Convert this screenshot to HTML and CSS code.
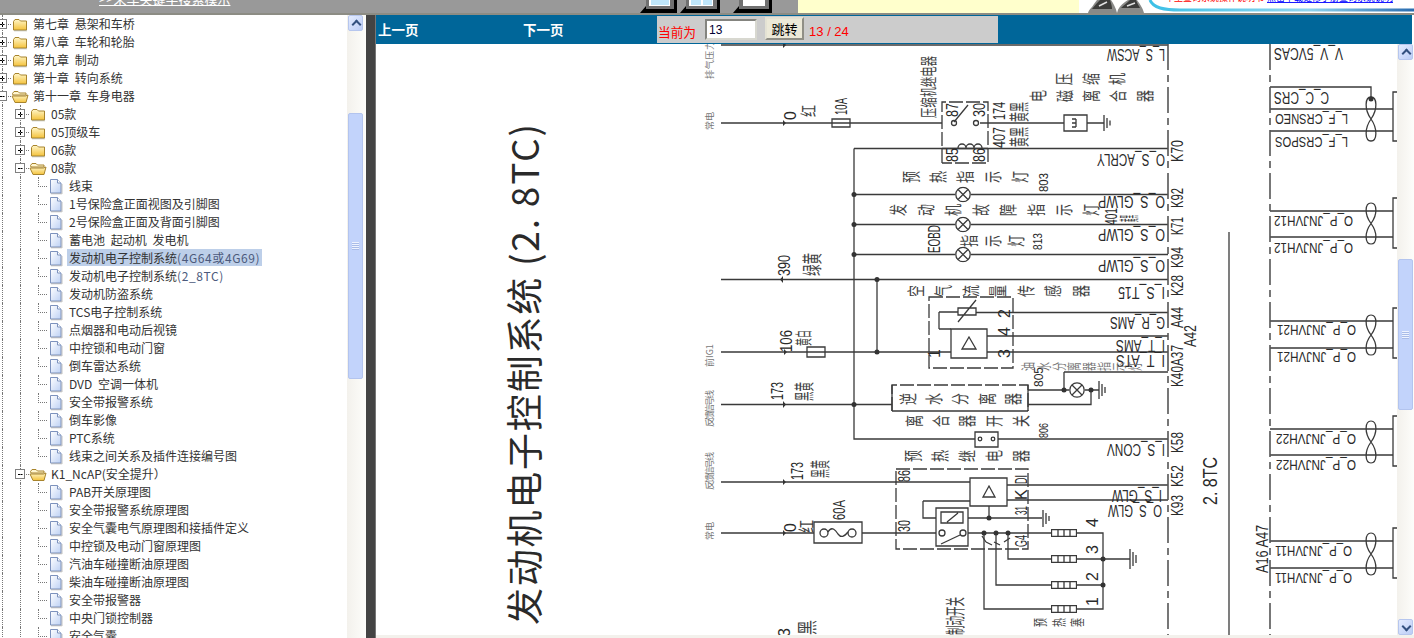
FILE: index.html
```html
<!DOCTYPE html>
<html lang="zh-CN">
<head>
  <meta charset="UTF-8"/>
  <title>电路图</title>
  <link rel="stylesheet" href="styles.css">
</head>
<body>
  <svg class="defs" width="0" height="0">
    <defs>
      <linearGradient id="gold" x1="0" y1="0" x2="0" y2="1">
        <stop offset="0" stop-color="#fff6c8"/>
        <stop offset="1" stop-color="#f4c23c"/>
      </linearGradient>
      <linearGradient id="paper" x1="0" y1="0" x2="1" y2="1">
        <stop offset="0" stop-color="#ffffff"/>
        <stop offset="1" stop-color="#bcd0f4"/>
      </linearGradient>
      <symbol id="folder" viewBox="0 0 18 18">
        <path d="M2.500 6.500 l1.500-2 h4 l1.500 1.500 h6 v9 h-13z" fill="url(#gold)" stroke="#a8842c"/>
        <path d="M3 15.800 h13" stroke="#8a8a7a" stroke-opacity=".5"/>
      </symbol>
      <symbol id="folder-open" viewBox="0 0 18 18">
        <path d="M1.500 6.500 l1.500-2 h4 l1.500 1.500 h6.500 v2 h-13z" fill="#fff6d0" stroke="#a8842c"/>
        <path d="M1 9 h13.500 l2.500 -1 l-2 7.500 h-11z" fill="url(#gold)" stroke="#a8842c"/>
      </symbol>
      <symbol id="doc" viewBox="0 0 18 18">
        <path d="M3.500 2.500 h7 l3.500 3.500 v10 h-10.500z" fill="url(#paper)" stroke="#7d92bd"/>
        <path d="M10.500 2.500 v3.500 h3.500" fill="#fff" stroke="#7d92bd"/>
        <path d="M4 16.800 h11 M15 7 v10" stroke="#9a9a9a" stroke-opacity=".6"/>
      </symbol>
      <symbol id="twist" viewBox="0 0 10 44" preserveAspectRatio="none" overflow="visible">
        <path d="M5 22 C-2 12 -1 0 5 0 C11 0 12 12 5 22 C-2 32 -1 44 5 44 C11 44 12 32 5 22z"/>
      </symbol>
      <symbol id="lamp" viewBox="0 0 16 16">
        <circle cx="8" cy="8" r="7.200"/>
        <path d="M3 3 L13 13 M13 3 L3 13"/>
      </symbol>
      <symbol id="conn" viewBox="0 0 26 8">
        <path d="M.5 .5 h25 v7 h-25z M7 .5 v7 M13 .5 v7 M19 .5 v7"/>
      </symbol>
    </defs>
  </svg>

  <header class="topbar">
    <div class="top-gray">
      <a class="search-link" href="#">&gt;&gt;来车关键字搜索模示</a>
      <div class="win-icons">
        <svg class="win" width="37" height="13" viewBox="0 0 37 13"><path d="M0 13 L6 6 V0 H37 V13z" fill="#000"/><path d="M6 0 H34 V9 H6z" fill="#707070"/><path d="M9 0 H30 V6 H9z" fill="#fff"/><path d="M11 0 H29 V5 H11z" fill="#bfe6fa"/></svg>
        <svg class="win" width="40" height="13" viewBox="0 0 40 13"><path d="M0 13 L6 6 V0 H40 V13z" fill="#000"/><path d="M6 0 H37 V9 H6z" fill="#707070"/><path d="M9 0 H33 V6 H9z" fill="#fff"/><path d="M11 0 H21 V5 H11z M23 0 H32 V5 H23z" fill="#bfe6fa"/></svg>
        <svg class="win win-last" width="39" height="13" viewBox="0 0 39 13"><path d="M0 13 L6 6 V0 H39 V13z" fill="#000"/><path d="M6 0 H36 V9 H6z" fill="#707070"/><path d="M10 0 H32 V6 H10z" fill="#fff"/></svg>
      </div>
    </div>
    <div class="top-note"></div>
    <svg class="top-promo" width="335" height="13" viewBox="1079 0 335 13">
      <linearGradient id="sky" gradientUnits="userSpaceOnUse" x1="1150" y1="0" x2="1414" y2="0">
        <stop offset="0" stop-color="#3cc0e6"/>
        <stop offset=".6" stop-color="#8fd4ee"/>
        <stop offset="1" stop-color="#2a6cb0"/>
      </linearGradient>
      <path d="M1088 13 C1089 9 1092 8 1094 4 L1097 0 H1111 C1113 3 1116 8 1117 13z" fill="#8a8a88"/>
      <path d="M1117 13 C1118 8 1121 5 1125 2 L1128 0 H1137 C1139 3 1143 8 1144 13z" fill="#8a8a88"/>
      <path d="M1092 9 C1095 5 1098 2 1100 0 H1110 C1111 3 1112 6 1112 9z" fill="#3c3c3a"/>
      <path d="M1121 8 C1124 5 1128 2 1130 0 H1136 C1137 3 1139 6 1140 8z" fill="#3c3c3a"/>
      <path d="M1099 6 L1107 2 M1127 6 L1135 3" stroke="#e0e0e0" stroke-width="1.500"/>
      <path d="M1150 0 C1153 8 1164 10 1180 10 H1414" fill="none" stroke="url(#sky)" stroke-width="3"/>
      <text class="promo-red" x="1165" y="1">车型查询系统操作说明书</text>
      <text class="promo-blue" x="1267" y="1">点击下载维修手册查询系统说明</text>
    </svg>
  </header>

  <main class="main">
    <aside class="side">
      <nav class="tree">
        <div class="row"><i class="cell plus"></i><svg class="ico"><use href="#folder"/></svg><a>第七章 悬架和车桥</a></div>
        <div class="row"><i class="cell plus"></i><svg class="ico"><use href="#folder"/></svg><a>第八章 车轮和轮胎</a></div>
        <div class="row"><i class="cell plus"></i><svg class="ico"><use href="#folder"/></svg><a>第九章 制动</a></div>
        <div class="row"><i class="cell plus"></i><svg class="ico"><use href="#folder"/></svg><a>第十章 转向系统</a></div>
        <div class="row"><i class="cell minus"></i><svg class="ico"><use href="#folder-open"/></svg><a>第十一章 车身电器</a></div>
        <div class="row"><i class="cell line"></i><i class="cell plus"></i><svg class="ico"><use href="#folder"/></svg><a>05款</a></div>
        <div class="row"><i class="cell line"></i><i class="cell plus"></i><svg class="ico"><use href="#folder"/></svg><a>05顶级车</a></div>
        <div class="row"><i class="cell line"></i><i class="cell plus"></i><svg class="ico"><use href="#folder"/></svg><a>06款</a></div>
        <div class="row"><i class="cell line"></i><i class="cell minus"></i><svg class="ico"><use href="#folder-open"/></svg><a>08款</a></div>
        <div class="row"><i class="cell line"></i><i class="cell line"></i><i class="cell join"></i><svg class="ico"><use href="#doc"/></svg><a>线束</a></div>
        <div class="row"><i class="cell line"></i><i class="cell line"></i><i class="cell join"></i><svg class="ico"><use href="#doc"/></svg><a>1号保险盒正面视图及引脚图</a></div>
        <div class="row"><i class="cell line"></i><i class="cell line"></i><i class="cell join"></i><svg class="ico"><use href="#doc"/></svg><a>2号保险盒正面及背面引脚图</a></div>
        <div class="row"><i class="cell line"></i><i class="cell line"></i><i class="cell join"></i><svg class="ico"><use href="#doc"/></svg><a>蓄电池 起动机 发电机</a></div>
        <div class="row"><i class="cell line"></i><i class="cell line"></i><i class="cell join"></i><svg class="ico"><use href="#doc"/></svg><a class="sel">发动机电子控制系统<span class="lat">(4G64或4G69)</span></a></div>
        <div class="row"><i class="cell line"></i><i class="cell line"></i><i class="cell join"></i><svg class="ico"><use href="#doc"/></svg><a>发动机电子控制系统<span class="lat">(2_8TC)</span></a></div>
        <div class="row"><i class="cell line"></i><i class="cell line"></i><i class="cell join"></i><svg class="ico"><use href="#doc"/></svg><a>发动机防盗系统</a></div>
        <div class="row"><i class="cell line"></i><i class="cell line"></i><i class="cell join"></i><svg class="ico"><use href="#doc"/></svg><a>TCS电子控制系统</a></div>
        <div class="row"><i class="cell line"></i><i class="cell line"></i><i class="cell join"></i><svg class="ico"><use href="#doc"/></svg><a>点烟器和电动后视镜</a></div>
        <div class="row"><i class="cell line"></i><i class="cell line"></i><i class="cell join"></i><svg class="ico"><use href="#doc"/></svg><a>中控锁和电动门窗</a></div>
        <div class="row"><i class="cell line"></i><i class="cell line"></i><i class="cell join"></i><svg class="ico"><use href="#doc"/></svg><a>倒车雷达系统</a></div>
        <div class="row"><i class="cell line"></i><i class="cell line"></i><i class="cell join"></i><svg class="ico"><use href="#doc"/></svg><a>DVD 空调一体机</a></div>
        <div class="row"><i class="cell line"></i><i class="cell line"></i><i class="cell join"></i><svg class="ico"><use href="#doc"/></svg><a>安全带报警系统</a></div>
        <div class="row"><i class="cell line"></i><i class="cell line"></i><i class="cell join"></i><svg class="ico"><use href="#doc"/></svg><a>倒车影像</a></div>
        <div class="row"><i class="cell line"></i><i class="cell line"></i><i class="cell join"></i><svg class="ico"><use href="#doc"/></svg><a>PTC系统</a></div>
        <div class="row"><i class="cell line"></i><i class="cell line"></i><i class="cell join"></i><svg class="ico"><use href="#doc"/></svg><a>线束之间关系及插件连接编号图</a></div>
        <div class="row"><i class="cell line"></i><i class="cell minus"></i><svg class="ico"><use href="#folder-open"/></svg><a>K1_NcAP(安全提升）</a></div>
        <div class="row"><i class="cell line"></i><i class="cell line"></i><i class="cell join"></i><svg class="ico"><use href="#doc"/></svg><a>PAB开关原理图</a></div>
        <div class="row"><i class="cell line"></i><i class="cell line"></i><i class="cell join"></i><svg class="ico"><use href="#doc"/></svg><a>安全带报警系统原理图</a></div>
        <div class="row"><i class="cell line"></i><i class="cell line"></i><i class="cell join"></i><svg class="ico"><use href="#doc"/></svg><a>安全气囊电气原理图和接插件定义</a></div>
        <div class="row"><i class="cell line"></i><i class="cell line"></i><i class="cell join"></i><svg class="ico"><use href="#doc"/></svg><a>中控锁及电动门窗原理图</a></div>
        <div class="row"><i class="cell line"></i><i class="cell line"></i><i class="cell join"></i><svg class="ico"><use href="#doc"/></svg><a>汽油车碰撞断油原理图</a></div>
        <div class="row"><i class="cell line"></i><i class="cell line"></i><i class="cell join"></i><svg class="ico"><use href="#doc"/></svg><a>柴油车碰撞断油原理图</a></div>
        <div class="row"><i class="cell line"></i><i class="cell line"></i><i class="cell join"></i><svg class="ico"><use href="#doc"/></svg><a>安全带报警器</a></div>
        <div class="row"><i class="cell line"></i><i class="cell line"></i><i class="cell join"></i><svg class="ico"><use href="#doc"/></svg><a>中央门锁控制器</a></div>
        <div class="row"><i class="cell line"></i><i class="cell line"></i><i class="cell join"></i><svg class="ico"><use href="#doc"/></svg><a>安全气囊</a></div>
      </nav>
      <div class="vscroll left-scroll">
        <div class="sbtn up"></div>
        <div class="thumb"><span class="grip"></span></div>
      </div>
    </aside>

    <div class="divider"></div>

    <section class="viewer">
      <div class="pager">
        <a class="page-link first">上一页</a>
        <a class="page-link">下一页</a>
        <form class="jump">
          <span class="now">当前为</span>
          <input class="page-input" value="13">
          <button class="go" type="button">跳转</button>
          <span class="count">13 / 24</span>
        </form>
      </div>
      <div class="viewer-body">
        <svg class="sheet" width="1021" height="591" viewBox="376 44 1021 591">
          <!-- wires -->
          <g class="w">
            <path d="M721 45 H1168"/>
            <path d="M721 123 H942 M980 123 H1064 M1087 123 H1104"/>
            <path d="M854 148.500 H1168 M854 148.500 V439 H975 M998 439 H1168"/>
            <path d="M854 194.500 H955 M971 194.500 H1168"/>
            <path d="M854 224.500 H955 M971 224.500 H1168"/>
            <path d="M854 254.500 H955 M971 254.500 H1168"/>
            <path d="M721 279.500 H1168 M877 279.500 V352"/>
            <path d="M721 352 H951 M987 352 H1168 M987 336 H1168 M976 312.500 H1168"/>
            <path d="M1064 372 H1168 M1064 372 V390 M1028 390 H1069 M1085 390 H1099 M1028 404.500 H1091 V390"/>
            <path d="M721 404.500 H892"/>
            <path d="M721 482 H970 M1007 485 H1168 M1007 500 H1168"/>
            <path d="M721 533 H814 M862 533 H936 M968 533 H1051"/>
            <path d="M923 501 H970 M923 501 V518 H936 M968 518 H1042 M989 506 V518"/>
            <path d="M1008 533 V559 H1051 M996 533 V585 H1051 M984 533 V609 H1051"/>
            <path d="M1077 533 H1103 V609 H1077 M1077 559 H1130 M1077 585 H1103"/>
            <path d="M1229 232 V635"/>
            <path d="M1270 87 H1371 V98 M1270 109 H1393 M1270 131 H1393"/>
            <path d="M1270 211 H1393 M1270 237 H1393 M1270 321 H1393 M1270 348 H1393"/>
            <path d="M1270 429 H1393 M1270 455 H1393 M1270 541 H1393 M1270 568 H1393"/>
            <path d="M1397 92 H1393 V141 H1397 M1397 198 H1393 V248 H1397 M1397 308 H1393 V358 H1397 M1397 416 H1393 V466 H1397 M1397 528 H1393 V578 H1397"/>
          </g>
          <!-- boxes -->
          <g class="w">
            <path class="dash" d="M942 163 V102 H988 V163 H942"/>
            <path d="M942 148.500 H988"/>
            <path d="M954 122 L968 105"/>
            <circle cx="954" cy="123" r="2.500"/><circle cx="976" cy="123" r="2.500"/>
            <path d="M958 148 a4 4 0 0 1 8 0 a4 4 0 0 1 8 0 a4 4 0 0 1 8 0"/>
            <path d="M1064 115 H1087 V131 H1064z M1072 119 h4 M1076 119 v8 M1072 127 h4 M1072 123 h4"/>
            <path d="M832 119 H850 V127 H832z"/>
            <path d="M807 347 h18 v10 h-18z"/>
            <path class="dash" d="M929 297 H1013 V368 H929z"/>
            <path d="M939 312 H958 M939 312 V329 M939 329 H951"/>
            <path d="M958 308 H976 V315 H958z M958 322 L976 300"/>
            <path d="M951 329 H987 V358 H951z M969 337 L976 349 H962z"/>
            <path class="dash" d="M892 411 V385 H1028 V411"/>
            <path d="M892 411 H1028 M892 385 V411 M1028 385 V411"/>
            <path d="M975 432 H998 V447 H975z"/>
            <circle cx="980" cy="439" r="1.800"/><circle cx="993" cy="439" r="1.800"/>
            <path class="dash" d="M896 469 H1028 V549 H896z"/>
            <path d="M970 478 H1007 V506 H970z M989 486 L995 497 H983z"/>
            <path d="M814 522 H862 V543 H814z"/>
            <circle cx="824" cy="533" r="4"/><circle cx="852" cy="533" r="4"/>
            <path d="M828 532 c4 -7 8 -1 10 2 c3 4 6 3 10 -2"/>
            <path d="M936 508 H968 V546 H936z M941 512 H963 V523 H941z M947 522 L958 513"/>
            <circle cx="942" cy="533" r="3"/><circle cx="963" cy="533" r="3"/>
            <path d="M941 544 L960 535"/>
            <path d="M1104 115 V131 M1107 118 V128 M1110 120.500 V125.500"/>
            <path d="M1099 381 V399 M1102 384 V396 M1105 387 V393"/>
            <path d="M1043 510 V527 M1046 513 V524 M1049 516 V521"/>
            <path d="M1130 549 V569 M1133 552 V566 M1136 555 V563"/>
            <path d="M992 545 l-6 -3 M982 536 l4 6 M1000 545 l-6 -3 M1010 538 l-6 4"/>
          </g>
          <g class="w dash-thick">
            <path d="M1168 44 V635"/>
            <path d="M1270 44 V635"/>
          </g>
          <g class="w">
            <use href="#lamp" x="955" y="186.500" width="16" height="16"/>
            <use href="#lamp" x="955" y="216.500" width="16" height="16"/>
            <use href="#lamp" x="955" y="246.500" width="16" height="16"/>
            <use href="#lamp" x="1069" y="382" width="16" height="16"/>
            <use href="#conn" x="1051" y="529" width="26" height="8"/>
            <use href="#conn" x="1051" y="555" width="26" height="8"/>
            <use href="#conn" x="1051" y="581" width="26" height="8"/>
            <use href="#conn" x="1051" y="605" width="26" height="8"/>
            <use href="#twist" x="1366" y="97" width="10" height="44"/>
            <use href="#twist" x="1366" y="203" width="10" height="41"/>
            <use href="#twist" x="1366" y="315" width="10" height="40"/>
            <use href="#twist" x="1366" y="421" width="10" height="42"/>
            <use href="#twist" x="1366" y="533" width="10" height="42"/>
          </g>
          <g class="dots">
            <circle cx="854" cy="194.500" r="2.500"/><circle cx="854" cy="224.500" r="2.500"/><circle cx="854" cy="254.500" r="2.500"/>
            <circle cx="877" cy="279.500" r="2.500"/><circle cx="877" cy="352" r="2.500"/><circle cx="854" cy="404.500" r="2.500"/>
            <circle cx="1064" cy="390" r="2.500"/><circle cx="1091" cy="390" r="2.500"/><circle cx="989" cy="518" r="2.500"/>
            <circle cx="984" cy="533" r="2.500"/><circle cx="996" cy="533" r="2.500"/><circle cx="1008" cy="533" r="2.500"/>
            <circle cx="1103" cy="559" r="2.500"/><circle cx="1103" cy="585" r="2.500"/><circle cx="1371" cy="99" r="2.500"/>
            <path d="M783 42 l3 3 l-3 3z M783 120 l3 3 l-3 3z M783 276 l-3 3.500 l3 3.500z M784 349 l3 3 l-3 3z M783 401 l3 3.500 l-3 3.500z M783 479 l3 3 l-3 3z M783 530 l3 3 l-3 3z"/>
          </g>

          <!-- title -->
          <text class="title" transform="translate(539 625) rotate(-90)" textLength="501" lengthAdjust="spacing">发动机电子控制系统 (2. 8TC)</text>
          <text class="lb big" transform="translate(1217 505) rotate(-90)" textLength="48" lengthAdjust="spacingAndGlyphs">2. 8TC</text>

          <!-- upside down signal names, underscores sit above the letters -->
          <g class="lb" transform="translate(0 1.500)">
            <text transform="translate(1165 47) rotate(180)" textLength="58" lengthAdjust="spacingAndGlyphs">L_S_ACSW</text>
            <text transform="translate(1165 152) rotate(180)" textLength="68" lengthAdjust="spacingAndGlyphs">O_S_ACRLY</text>
            <text transform="translate(1165 194) rotate(180)" textLength="67" lengthAdjust="spacingAndGlyphs">O_S_GLWP</text>
            <text transform="translate(1165 227) rotate(180)" textLength="67" lengthAdjust="spacingAndGlyphs">O_S_GLWP</text>
            <text transform="translate(1165 258) rotate(180)" textLength="67" lengthAdjust="spacingAndGlyphs">O_S_GLWP</text>
            <text transform="translate(1165 285) rotate(180)" textLength="47" lengthAdjust="spacingAndGlyphs">I_S_T15</text>
            <text transform="translate(1165 315) rotate(180)" textLength="55" lengthAdjust="spacingAndGlyphs">G_R_AMS</text>
            <text transform="translate(1165 338) rotate(180)" textLength="49" lengthAdjust="spacingAndGlyphs">I_T_AMS</text>
            <text transform="translate(1165 353) rotate(180)" textLength="49" lengthAdjust="spacingAndGlyphs">I_T_ATS</text>
            <text transform="translate(1165 442) rotate(180)" textLength="58" lengthAdjust="spacingAndGlyphs">I_S_CONV</text>
            <text transform="translate(1162 488) rotate(180)" textLength="50" lengthAdjust="spacingAndGlyphs">I_S_GLW</text>
            <text transform="translate(1162 503) rotate(180)" textLength="54" lengthAdjust="spacingAndGlyphs">O_S_GLW</text>
            <text transform="translate(1343 46) rotate(180)" textLength="69" lengthAdjust="spacingAndGlyphs">V_V_5VCAS</text>
            <text transform="translate(1329 90) rotate(180)" textLength="55" lengthAdjust="spacingAndGlyphs">C_C_CRS</text>
          </g>
          <g class="lb sm" transform="translate(0 1.500)">
            <text transform="translate(1348 112) rotate(180)" textLength="73" lengthAdjust="spacingAndGlyphs">L_F_CRSNEO</text>
            <text transform="translate(1348 135) rotate(180)" textLength="73" lengthAdjust="spacingAndGlyphs">L_F_CRSPOS</text>
            <text transform="translate(1353 214) rotate(180)" textLength="79" lengthAdjust="spacingAndGlyphs">O_P_JNJVH12</text>
            <text transform="translate(1353 241) rotate(180)" textLength="79" lengthAdjust="spacingAndGlyphs">O_P_JNJVH12</text>
            <text transform="translate(1356 323) rotate(180)" textLength="79" lengthAdjust="spacingAndGlyphs">O_P_JNJVH21</text>
            <text transform="translate(1356 350) rotate(180)" textLength="79" lengthAdjust="spacingAndGlyphs">O_P_JNJVH21</text>
            <text transform="translate(1356 432) rotate(180)" textLength="80" lengthAdjust="spacingAndGlyphs">O_P_JNJVH22</text>
            <text transform="translate(1356 458) rotate(180)" textLength="80" lengthAdjust="spacingAndGlyphs">O_P_JNJVH22</text>
            <text transform="translate(1352 544) rotate(180)" textLength="77" lengthAdjust="spacingAndGlyphs">O_P_JNJVH11</text>
            <text transform="translate(1352 571) rotate(180)" textLength="77" lengthAdjust="spacingAndGlyphs">O_P_JNJVH11</text>
          </g>

          <!-- sideways codes and numbers -->
          <g class="lb">
            <text transform="translate(1183 162) rotate(-90)" textLength="22" lengthAdjust="spacingAndGlyphs">K70</text>
            <text transform="translate(1183 208) rotate(-90)" textLength="20" lengthAdjust="spacingAndGlyphs">K92</text>
            <text transform="translate(1183 235) rotate(-90)" textLength="18" lengthAdjust="spacingAndGlyphs">K71</text>
            <text transform="translate(1183 268) rotate(-90)" textLength="21" lengthAdjust="spacingAndGlyphs">K94</text>
            <text transform="translate(1183 296) rotate(-90)" textLength="21" lengthAdjust="spacingAndGlyphs">K28</text>
            <text transform="translate(1183 328) rotate(-90)" textLength="21" lengthAdjust="spacingAndGlyphs">A44</text>
            <text transform="translate(1196 347) rotate(-90)" textLength="22" lengthAdjust="spacingAndGlyphs">A42</text>
            <text transform="translate(1183 387) rotate(-90)" textLength="42" lengthAdjust="spacingAndGlyphs">K40A37</text>
            <text transform="translate(1183 453) rotate(-90)" textLength="21" lengthAdjust="spacingAndGlyphs">K58</text>
            <text transform="translate(1183 487) rotate(-90)" textLength="22" lengthAdjust="spacingAndGlyphs">K52</text>
            <text transform="translate(1183 516) rotate(-90)" textLength="21" lengthAdjust="spacingAndGlyphs">K93</text>
            <text transform="translate(1268 573) rotate(-90)" textLength="48" lengthAdjust="spacingAndGlyphs">A16 A47</text>
            <text transform="translate(940 253) rotate(-90)" textLength="28" lengthAdjust="spacingAndGlyphs">EOBD</text>
            <text transform="translate(1005 120) rotate(-90)" textLength="18" lengthAdjust="spacingAndGlyphs">174</text>
            <text transform="translate(1005 148) rotate(-90)" textLength="21" lengthAdjust="spacingAndGlyphs">407</text>
            <text transform="translate(1117 225) rotate(-90)" textLength="17" lengthAdjust="spacingAndGlyphs">401</text>
            <text transform="translate(790 276) rotate(-90)" textLength="21" lengthAdjust="spacingAndGlyphs">390</text>
            <text transform="translate(792 352) rotate(-90)" textLength="22" lengthAdjust="spacingAndGlyphs">106</text>
            <text transform="translate(783 400) rotate(-90)" textLength="18" lengthAdjust="spacingAndGlyphs">173</text>
            <text transform="translate(803 480) rotate(-90)" textLength="18" lengthAdjust="spacingAndGlyphs">173</text>
            <text transform="translate(847 115) rotate(-90)" textLength="17" lengthAdjust="spacingAndGlyphs">10A</text>
            <text transform="translate(845 520) rotate(-90)" textLength="20" lengthAdjust="spacingAndGlyphs">60A</text>
            <text transform="translate(796 120) rotate(-90)">0</text>
            <text transform="translate(796 532) rotate(-90)">0</text>
            <text transform="translate(790 637) rotate(-90)">3</text>
            <text transform="translate(958 117) rotate(-90)" textLength="14" lengthAdjust="spacingAndGlyphs">87</text>
            <text transform="translate(985 117) rotate(-90)" textLength="14" lengthAdjust="spacingAndGlyphs">30</text>
            <text transform="translate(958 162) rotate(-90)" textLength="14" lengthAdjust="spacingAndGlyphs">85</text>
            <text transform="translate(985 162) rotate(-90)" textLength="14" lengthAdjust="spacingAndGlyphs">86</text>
            <text transform="translate(910 482) rotate(-90)" textLength="12" lengthAdjust="spacingAndGlyphs">86</text>
            <text transform="translate(910 532) rotate(-90)" textLength="12" lengthAdjust="spacingAndGlyphs">30</text>
            <text transform="translate(1027 484) rotate(-90)" textLength="9" lengthAdjust="spacingAndGlyphs">DI</text>
            <text transform="translate(1027 500) rotate(-90)">K</text>
            <text transform="translate(1027 515) rotate(-90)" textLength="9" lengthAdjust="spacingAndGlyphs">31</text>
            <text transform="translate(1027 547) rotate(-90)" textLength="12" lengthAdjust="spacingAndGlyphs">G4</text>
            <text transform="translate(1098 527) rotate(-90)">4</text>
            <text transform="translate(1098 554) rotate(-90)">3</text>
            <text transform="translate(1098 581) rotate(-90)">2</text>
            <text transform="translate(1098 606) rotate(-90)">1</text>
            <text transform="translate(1010 318) rotate(-90)">2</text>
            <text transform="translate(1010 336) rotate(-90)">4</text>
            <text transform="translate(1010 358) rotate(-90)">3</text>
            <text transform="translate(940 358) rotate(-90)">1</text>
          </g>
          <g class="lb tiny">
            <text transform="translate(1048 192) rotate(-90)" textLength="19" lengthAdjust="spacingAndGlyphs">803</text>
            <text transform="translate(1042 250) rotate(-90)" textLength="17" lengthAdjust="spacingAndGlyphs">813</text>
            <text transform="translate(1043 387) rotate(-90)" textLength="20" lengthAdjust="spacingAndGlyphs">805</text>
            <text transform="translate(1048 438) rotate(-90)" textLength="15" lengthAdjust="spacingAndGlyphs">806</text>
          </g>

          <!-- chinese labels, glyphs turned one by one and drawn wide like the scan -->
          <g class="cn" transform="scale(1.500 1)">
            <text x="612" y="183" rotate="-90" letter-spacing="6.170">预热指示灯</text>
            <text x="603.300" y="216" rotate="-90" letter-spacing="6.400">发动机故障指示灯</text>
            <text x="650.700" y="247" rotate="-90" letter-spacing="3.670">指示灯</text>
            <text x="615.300" y="297" rotate="-90" letter-spacing="6.330">空气流量传感器</text>
            <text x="714" y="85" rotate="-90" letter-spacing="5.800">压缩机</text>
            <text x="696.700" y="102" rotate="-90" letter-spacing="5.800">电磁离合器</text>
            <text x="610" y="405" rotate="-90" letter-spacing="5.500">逆水分离器</text>
            <text x="614" y="427" rotate="-90" letter-spacing="5.830">离合器开关</text>
            <text x="613.300" y="462" rotate="-90" letter-spacing="6">预热继电器</text>
            <text class="small" x="697" y="627" rotate="-90" letter-spacing="3.200">预热塞</text>
            <text class="small grey" x="689" y="371" rotate="-90" letter-spacing="1.100">油水分离器指示灯</text>
          </g>
          <!-- wire colours, squeezed along the reading direction -->
          <g class="cn">
            <text class="f17" transform="translate(935 118) rotate(-90)" textLength="62" lengthAdjust="spacingAndGlyphs">压缩机继电器</text>
            <text class="f20" transform="translate(963 635) rotate(-90)" textLength="38" lengthAdjust="spacingAndGlyphs">制动开关</text>
            <text class="f17" transform="translate(815 117) rotate(-90)" textLength="12" lengthAdjust="spacingAndGlyphs">红</text>
            <text class="f17" transform="translate(813 533) rotate(-90)" textLength="13" lengthAdjust="spacingAndGlyphs">红</text>
            <text class="f20" transform="translate(820 276) rotate(-90)" textLength="23" lengthAdjust="spacingAndGlyphs">绿黄</text>
            <text class="f17" transform="translate(810 346) rotate(-90)" textLength="16" lengthAdjust="spacingAndGlyphs">黄白</text>
            <text class="f20" transform="translate(812 401) rotate(-90)" textLength="19" lengthAdjust="spacingAndGlyphs">黑黄</text>
            <text class="f20" transform="translate(828 478) rotate(-90)" textLength="18" lengthAdjust="spacingAndGlyphs">黑黄</text>
            <text class="f20" transform="translate(1027 122) rotate(-90)" textLength="20" lengthAdjust="spacingAndGlyphs">黄黑</text>
            <text class="f20" transform="translate(1027 147) rotate(-90)" textLength="20" lengthAdjust="spacingAndGlyphs">黄黑</text>
            <text class="f20" transform="translate(1137 222) rotate(-90)" textLength="7" lengthAdjust="spacingAndGlyphs">黄黑</text>
            <text class="f20" transform="translate(815 635) rotate(-90)" textLength="15" lengthAdjust="spacingAndGlyphs">黑</text>
          </g>
          <g class="cn">
            <text class="grey" transform="translate(713 79) rotate(-90)" textLength="38">排气压力</text>
            <text class="grey" transform="translate(713 130) rotate(-90)">常电</text>
            <text class="grey" transform="translate(713 367) rotate(-90)">前IG1</text>
            <text class="grey" transform="translate(713 427) rotate(-90)" textLength="37">反馈信号线</text>
            <text class="grey" transform="translate(713 490) rotate(-90)" textLength="38">反馈信号线</text>
            <text class="grey" transform="translate(713 540) rotate(-90)">常电</text>
          </g>
        </svg>
        <div class="vscroll right-scroll">
          <div class="sbtn up"></div>
          <div class="thumb"><span class="grip"></span></div>
          <div class="sbtn down"></div>
        </div>
      </div>
      <div class="hscroll"></div>
    </section>
  </main>
</body>
</html>
```

FILE: styles.css
```css
* {
  box-sizing: border-box;
}
body {
  margin: 0;
  height: 100vh;
  overflow: hidden;
  display: flex;
  flex-direction: column;
  background: #fff;
  font-family: "Noto Sans CJK SC", sans-serif;
  font-size: 12px;
  color: #333;
}
.defs {
  position: absolute;
}

/* top banner, only its lower edge is visible */
.topbar {
  height: 15px;
  flex: none;
  display: flex;
  overflow: hidden;
  border-bottom: 2px solid #8c8c84;
}
.top-gray {
  width: 798px;
  background: #999;
  display: flex;
  justify-content: space-between;
  align-items: flex-end;
  padding-left: 99px;
}
.search-link {
  color: #fff;
  font-size: 13px;
  line-height: 16px;
  margin-bottom: 6px;
  text-decoration: underline;
  white-space: nowrap;
}
.win-icons {
  display: flex;
  gap: 3px;
  margin-right: 26px;
}
.win {
  display: block;
}
.win-last {
  margin-left: 10px;
}
.top-note {
  width: 281px;
  background: #ffffcc;
}
.top-promo {
  display: block;
  background: #fff;
}
.promo-red {
  fill: #f00;
  font-size: 9px;
}
.promo-blue {
  fill: #00f;
  font-size: 9px;
  text-decoration: underline;
}

.main {
  flex: 1;
  min-height: 0;
  display: flex;
}

/* tree on the left */
.side {
  width: 366px;
  flex: none;
  display: flex;
  overflow: hidden;
}
.tree {
  flex: 1;
  margin-left: -7px;
  overflow: hidden;
}
.row {
  height: 18px;
  display: flex;
  align-items: center;
  white-space: nowrap;
}
.row a {
  margin-left: 2px;
  padding: 0 2px;
  position: relative;
  top: -1px;
  line-height: 17px;
  word-spacing: 3px;
  color: #333;
}
.row a.sel {
  background: #bdcfe9;
}
.lat {
  color: #4c5a7c;
  letter-spacing: .6px;
}
.ico {
  width: 18px;
  height: 18px;
  flex: none;
}
.cell {
  width: 18px;
  height: 18px;
  flex: none;
  position: relative;
  display: block;
}
.line::before,
.join::before,
.plus::before,
.minus::before {
  content: "";
  position: absolute;
  left: 9px;
  top: 0;
  height: 18px;
  border-left: 1px dotted #777;
}
.join::after,
.plus::after,
.minus::after {
  content: "";
  position: absolute;
  left: 9px;
  top: 9px;
  width: 9px;
  border-top: 1px dotted #777;
}
.join::before {
  height: 10px;
}
.plus,
.minus {
  background-repeat: no-repeat;
  outline: 1px solid #808080;
  outline-offset: -5px;
}
.plus {
  background-image:
    linear-gradient(#000, #000), linear-gradient(#000, #000), linear-gradient(#fff, #fff);
  background-size: 5px 1px, 1px 5px, 9px 9px;
  background-position: 7px 9px, 9px 7px, 5px 5px;
}
.minus {
  background-image: linear-gradient(#000, #000), linear-gradient(#fff, #fff);
  background-size: 5px 1px, 9px 9px;
  background-position: 7px 9px, 5px 5px;
}
.plus::before,
.minus::before {
  z-index: -1;
}

/* xp style scrollbars */
.vscroll {
  flex: none;
  background: linear-gradient(90deg, #f3f1ec, #fdfdfa);
  display: flex;
  flex-direction: column;
  align-items: center;
}
.left-scroll {
  width: 19px;
  padding-right: 3px;
}
.right-scroll {
  width: 17px;
}
.sbtn {
  width: 15px;
  height: 16px;
  flex: none;
  position: relative;
  background: linear-gradient(135deg, #e3ebff, #bccdf6);
  border: 1px solid #b6c6ee;
  border-radius: 2px;
}
.sbtn::after {
  content: "";
  position: absolute;
  left: 4px;
  width: 5px;
  height: 5px;
  border-left: 2px solid #33507f;
  border-top: 2px solid #33507f;
}
.up::after {
  top: 5px;
  transform: rotate(45deg);
}
.down::after {
  top: 3px;
  transform: rotate(225deg);
}
.thumb {
  width: 15px;
  flex: none;
  display: flex;
  align-items: center;
  justify-content: center;
  background: #c2d3fb;
  border: 1px solid #b3c4ee;
  border-radius: 2px;
}
.left-scroll .thumb {
  height: 266px;
  margin-top: 82px;
}
.right-scroll .thumb {
  height: 151px;
  margin-top: 199px;
}
.right-scroll .sbtn.down {
  margin-top: auto;
}
.grip {
  width: 7px;
  height: 8px;
  background: repeating-linear-gradient(#eef3ff 0 1px, #a9bce8 1px 2px);
}

.divider {
  width: 10px;
  flex: none;
  background: #444;
  border-right: 1px solid #777;
}

/* document viewer */
.viewer {
  flex: 1;
  min-width: 0;
  display: flex;
  flex-direction: column;
}
.pager {
  height: 29px;
  flex: none;
  margin-right: 2px;
  padding-top: 1px;
  background: #006699;
  display: flex;
  align-items: flex-start;
}
.page-link {
  width: 145px;
  color: #fff;
  font-size: 13.500px;
  font-weight: bold;
  line-height: 26px;
}
.first {
  margin-left: 2px;
}
.jump {
  width: 341px;
  height: 27px;
  margin: 0 0 0 -11px;
  background: #ccc;
  display: flex;
  align-items: flex-start;
  color: #f00;
}
.now {
  margin: 8px 0 0 1px;
  font-size: 12.700px;
  line-height: 16px;
}
.page-input {
  width: 52px;
  height: 21px;
  margin: 3px 0 0 9px;
  padding: 1px 2px;
  border: 2px inset #d8d8d0;
  background: #fff;
  color: #003;
  font: 12px "Liberation Sans", sans-serif;
}
.go {
  width: 39px;
  height: 23px;
  margin: 1px 0 0 8px;
  padding: 0;
  background: #ece9d8;
  border: 2px outset #e4e2d4;
  color: #000;
  font: 13px "Noto Sans CJK SC", sans-serif;
}
.count {
  margin: 8px 0 0 5px;
  font-size: 13px;
  line-height: 16px;
  font-family: "Liberation Sans", sans-serif;
}
.viewer-body {
  flex: 1;
  min-height: 0;
  display: flex;
}
.sheet {
  display: block;
  flex: none;
  background: #fff;
}
.hscroll {
  height: 3px;
  flex: none;
  background: #f3f1ec;
}

/* the wiring diagram */
.w {
  fill: none;
  stroke: #3a3a3a;
  stroke-width: 1.3;
}
.w use {
  fill: none;
}
.dash {
  stroke-dasharray: 14 3;
}
.dash-thick {
  stroke: #555;
  stroke-width: 1.6;
  stroke-dasharray: 26 5 7 5;
}
.dots {
  fill: #333;
}
.title {
  font-size: 37px;
  fill: #2a2a2a;
}
.lb {
  font-family: "Liberation Sans", sans-serif;
  font-size: 16px;
  fill: #2a2a2a;
}
.lb.sm {
  font-size: 14px;
}
.lb.tiny {
  font-size: 12px;
}
.lb.big {
  font-size: 20px;
}
.cn {
  font-size: 12px;
  fill: #444;
}
.cn .small {
  font-size: 9px;
}
.cn .f17 {
  font-size: 17px;
}
.cn .f20 {
  font-size: 20px;
}
.cn .grey {
  fill: #777;
  font-size: 9px;
}
```
